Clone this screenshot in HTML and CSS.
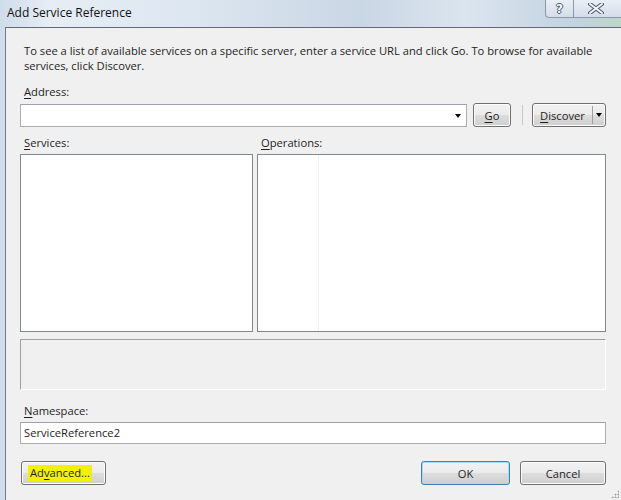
FILE: index.html
```html
<!DOCTYPE html>
<html lang="en">
    <head>
        <meta charset="UTF-8">
        <meta name="viewport" content="width=device-width, initial-scale=1.0">
        <title>Add Service Reference</title>
        <link rel="stylesheet" href="styles.css">
    </head>
    <body>
        <div class="janela">
            <!--Barra de Título-->
            <div class="clTitulo">
                <span class="clTituloTexto">Add Service Reference</span>
                <div class="clCaption">
                    <div class="clCapBt clAjuda">?</div>
                    <div class="clCapBt clFechar">
                        <svg width="16" height="11" viewBox="0 0 16 11">
                            <path d="M2 1 L14 10 M14 1 L2 10" stroke="#4a5a6e" stroke-width="4" stroke-linecap="round"/>
                            <path d="M2 1 L14 10 M14 1 L2 10" stroke="#f4f7fb" stroke-width="2" stroke-linecap="round"/>
                        </svg>
                    </div>
                </div>
            </div>

            <div class="clCliente">
                <p class="clDescricao">To see a list of available services on a specific server, enter a service URL and click Go. To browse for available services, click Discover.</p>

                <label class="clRotulo clRotAddress" for="idEndereco"><u>A</u>ddress:</label>
                <div class="clLinhaEndereco">
                    <div class="clCombo" id="idEndereco">
                        <span class="clSeta"></span>
                    </div>
                    <div class="clBotao clBtGo"><u>G</u>o</div>
                    <div class="clSeparador"></div>
                    <div class="clBotao clBtDiscover">
                        <span class="clDiscTexto"><u>D</u>iscover</span>
                        <span class="clDiscSeta"><span class="clSeta"></span></span>
                    </div>
                </div>

                <div class="clListas">
                    <div class="clColServicos">
                        <div class="clRotulo"><u>S</u>ervices:</div>
                        <div class="clLista"></div>
                    </div>
                    <div class="clColOperacoes">
                        <div class="clRotulo"><u>O</u>perations:</div>
                        <div class="clLista clListaOp">
                            <div class="clDivisor"></div>
                        </div>
                    </div>
                </div>

                <div class="clStatus"></div>

                <label class="clRotulo clRotNamespace" for="idNamespace"><u>N</u>amespace:</label>
                <div class="clEntrada" id="idNamespace">ServiceReference2</div>

                <div class="clRodape">
                    <div class="clBotao clBtAvancado"><span class="clMarca">Ad<u>v</u>anced...</span></div>
                    <div class="clBotoesDir">
                        <div class="clBotao clBtOk">OK</div>
                        <div class="clBotao clBtCancel">Cancel</div>
                    </div>
                </div>
                <div class="clGrip"></div>
            </div>
        </div>
    </body>
</html>
```

FILE: styles.css
```css
/*Reset*/
html,
body,
p {
    margin: 0;
    padding: 0;
}

html {
    box-sizing: border-box;
}

*, *::before, *::after {
    box-sizing: inherit;
}

u {
    text-decoration: underline;
    text-underline-offset: 2px;
}

/*Janela*/
body {
    width: 621px;
    height: 500px;
    overflow: hidden;
    font-family: "Open Sans", "Noto Sans", sans-serif;
    font-size: 11.2px;
    color: #1e1e1e;
}

.janela {
    display: flex;
    flex-direction: column;
    width: 621px;
    height: 500px;
    background: linear-gradient(90deg, #cfdcea 0%, #e6edf5 8%, #dde7f1 30%, #c9d6e4 58%, #dbe5ef 75%, #c3d3e2 92%, #bcd6c8 100%);
}

/*Barra de Título*/
.clTitulo {
    display: flex;
    height: 27px;
    flex-shrink: 0;
}

.clTituloTexto {
    padding-left: 7px;
    padding-top: 4px;
    font-size: 12px;
    color: #111;
}

.clCaption {
    display: flex;
    margin-left: auto;
    height: 18px;
}

.clCapBt {
    display: flex;
    align-items: center;
    justify-content: center;
    height: 18px;
    border: 1px solid #8b98a8;
    border-top: none;
    background: linear-gradient(#e9eff6, #d3dde9);
}

.clAjuda {
    width: 29px;
    border-radius: 0 0 0 4px;
    font-family: "DejaVu Sans", sans-serif;
    font-weight: bold;
    font-size: 12px;
    color: #f4f7fb;
    text-shadow: -1px 0 #4a5a6e, 1px 0 #4a5a6e, 0 -1px #4a5a6e, 0 1px #4a5a6e;
}

.clFechar {
    width: 47px;
    border-left: none;
    border-right: none;
    padding-right: 4px;
}

/*Área Cliente*/
.clCliente {
    position: relative;
    flex: 1;
    margin-left: 5px;
    background-color: #f0f0f0;
    border-top: 1px solid #5f6b78;
    border-left: 1px solid #6f7b88;
    padding: 15px 15px 0 14px;
}

.clDescricao {
    padding-left: 4px;
    line-height: 15px;
    width: 590px;
}

.clRotulo {
    display: block;
    padding-left: 4px;
    line-height: 15px;
}

.clRotAddress {
    margin-top: 11px;
}

.clLinhaEndereco {
    display: flex;
    align-items: center;
    margin-top: 4px;
    height: 24px;
}

.clCombo {
    position: relative;
    width: 447px;
    height: 23px;
    background: #fff;
    border: 1px solid #abadb3;
    border-top-color: #9ea1a8;
}

.clSeta {
    display: inline-block;
    width: 0;
    height: 0;
    border-left: 3.5px solid transparent;
    border-right: 3.5px solid transparent;
    border-top: 4px solid #000;
}

.clCombo .clSeta {
    position: absolute;
    right: 5px;
    top: 9px;
}

.clBotao {
    display: flex;
    align-items: center;
    justify-content: center;
    height: 24px;
    border: 1px solid #707070;
    border-radius: 3px;
    background: linear-gradient(#f2f2f2 0%, #ebebeb 48%, #dddddd 52%, #cfcfcf 100%);
    box-shadow: inset 0 0 0 1px #fcfcfc;
    color: #1e1e1e;
}

.clBtGo {
    width: 38px;
    margin-left: 6px;
}

.clSeparador {
    width: 1px;
    height: 20px;
    margin-left: 11px;
    background: #c8c8c8;
}

.clBtDiscover {
    width: 74px;
    margin-left: 9px;
    justify-content: flex-start;
}

.clDiscTexto {
    flex: 1;
    text-align: center;
}

.clDiscSeta {
    display: flex;
    align-items: center;
    justify-content: center;
    width: 13px;
    height: 18px;
    border-left: 1px solid #a0a0a0;
}

/*Listas*/
.clListas {
    display: flex;
    gap: 4px;
    margin-top: 8px;
}

.clColServicos {
    width: 233px;
}

.clColOperacoes {
    width: 349px;
}

.clLista {
    margin-top: 4px;
    height: 178px;
    background: #fff;
    border: 1px solid #828790;
}

.clListaOp {
    display: flex;
}

.clDivisor {
    width: 1px;
    margin-left: 60px;
    height: 100%;
    background: #eef0f6;
}

.clStatus {
    margin-top: 7px;
    height: 51px;
    border: 1px solid #a0a0a0;
    border-right-color: #fff;
    border-bottom-color: #fff;
}

.clRotNamespace {
    margin-top: 13px;
}

.clEntrada {
    margin-top: 4px;
    height: 22px;
    line-height: 20px;
    padding-left: 3px;
    background: #fff;
    border: 1px solid #abadb3;
    border-top-color: #9ea1a8;
}

/*Rodapé*/
.clRodape {
    display: flex;
    margin-top: 17px;
    padding-left: 1px;
}

.clBtAvancado {
    width: 85px;
    justify-content: flex-start;
    padding-left: 6px;
}

.clMarca {
    background: #f2f200;
    padding: 0 2px;
    line-height: 16px;
}

.clBotoesDir {
    display: flex;
    gap: 10px;
    margin-left: auto;
}

.clBtOk {
    width: 89px;
    border-color: #3c7fb1;
    box-shadow: inset 0 0 0 1px #a9dbf6;
}

.clBtCancel {
    width: 86px;
}

.clGrip {
    position: absolute;
    right: 2px;
    bottom: 2px;
    width: 8px;
    height: 8px;
    background: radial-gradient(circle, #9a9a9a 0.8px, transparent 1.2px) 0 0 / 3px 3px;
    clip-path: polygon(100% 0, 100% 100%, 0 100%);
}
```
